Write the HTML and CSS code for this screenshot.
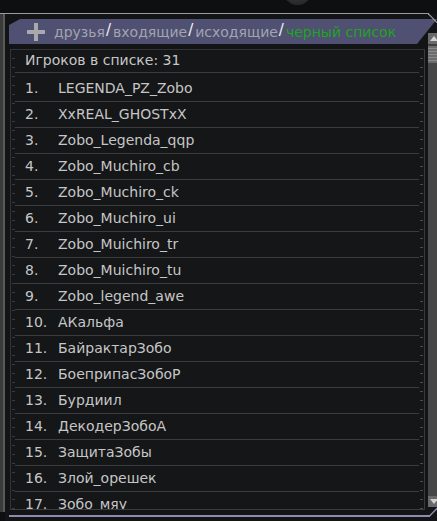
FILE: index.html
```html
<!DOCTYPE html>
<html lang="ru">
<head>
<meta charset="utf-8">
<link rel="stylesheet" href="styles.css">
</head>
<body>
<div class="top"><div class="knob"></div></div>
<div class="window">
  <div class="side"></div>
  <div class="main">
    <div class="tab">
      <svg class="plus" width="18" height="18" viewBox="0 0 18 18"><path d="M7 0h4v7h7v4h-7v7H7v-7H0V7h7z" fill="#a9a9ad"/></svg>
      <span class="link">друзья</span><span class="sep">/</span><span class="link">входящие</span><span class="sep">/</span><span class="link">исходящие</span><span class="sep">/</span><span class="link active">черный список</span>
    </div>
    <div class="content">
      <div class="listwrap">
        <div class="ruler-l"></div>
        <div class="list">
          <div class="head">Игроков в списке: 31</div>
          <ol class="rows">
            <li><span class="n">1.</span>LEGENDA_PZ_Zobo</li>
            <li><span class="n">2.</span>XxREAL_GHOSTxX</li>
            <li><span class="n">3.</span>Zobo_Legenda_qqp</li>
            <li><span class="n">4.</span>Zobo_Muchiro_cb</li>
            <li><span class="n">5.</span>Zobo_Muchiro_ck</li>
            <li><span class="n">6.</span>Zobo_Muchiro_ui</li>
            <li><span class="n">7.</span>Zobo_Muichiro_tr</li>
            <li><span class="n">8.</span>Zobo_Muichiro_tu</li>
            <li><span class="n">9.</span>Zobo_legend_awe</li>
            <li><span class="n">10.</span>АКальфа</li>
            <li><span class="n">11.</span>БайрактарЗобо</li>
            <li><span class="n">12.</span>БоеприпасЗобоР</li>
            <li><span class="n">13.</span>Бурдиил</li>
            <li><span class="n">14.</span>ДекодерЗобоА</li>
            <li><span class="n">15.</span>ЗащитаЗобы</li>
            <li><span class="n">16.</span>Злой_орешек</li>
            <li><span class="n">17.</span>Зобо_мяу</li>
          </ol>
        </div>
        <div class="ruler-r"></div>
      </div>
      <div class="scroll">
        <div class="btn up"></div>
        <div class="thumb"></div>
        <div class="track"></div>
        <div class="btn down"></div>
      </div>
    </div>
    <div class="bottom"></div>
  </div>
</div>
<svg class="corner-br" width="10" height="10" viewBox="0 0 10 10"><path d="M0 9.5L9 0.5" stroke="#8d8bb2" stroke-width="1.5" fill="none"/></svg>
<svg class="corner-tr" width="10" height="10" viewBox="0 0 10 10"><path d="M0 0.5L9 9.5" stroke="#9a9a9a" stroke-width="1.2" fill="none"/></svg>
</body>
</html>
```
FILE: styles.css
```css
html, body {
  margin: 0;
  padding: 0;
  background: #0e0f10;
  width: 437px;
  height: 521px;
  overflow: hidden;
  font-family: "DejaVu Sans", Tahoma, sans-serif;
}
body {
  position: relative;
}
.top {
  height: 13px;
  position: relative;
}
.knob {
  position: absolute;
  left: 283px;
  top: -24px;
  width: 29px;
  height: 29px;
  border-radius: 50%;
  background: radial-gradient(circle at 50% 40%, #4a4a4a, #2a2a2a 70%);
}
.window {
  display: flex;
  height: 507px;
  border-top: 1px solid #9a9a9a;
  margin-right: 8px;
}
.side {
  width: 3px;
  background: #3a3a3a;
  border-right: 2px solid #5a5a5a;
  height: 498px;
}
.main {
  flex: 1;
  display: flex;
  flex-direction: column;
  background: #131415;
  margin-right: -8px;
}
.tab {
  margin: 5px 0 0 4px;
  height: 25px;
  flex: none;
  background: #4f5072;
  display: flex;
  align-items: center;
  padding-left: 18px;
  clip-path: polygon(0 6px, 11px 0, 100% 0, calc(100% - 20px) 100%, 0 100%);
  font-size: 14px;
  color: #a4a4ae;
}
.plus {
  margin-right: 9px;
}
.sep {
  color: #f2f2f2;
  margin: 0 2px 0 1px;
  font-size: 15px;
  position: relative;
  top: -2px;
}
.active {
  color: #1ea51e;
}
.content {
  display: flex;
  height: 461px;
  flex: none;
  margin-top: 5px;
}
.listwrap {
  flex: 1;
  display: flex;
  margin-left: 5px;
  box-sizing: border-box;
  height: 461px;
  border-top: 1px solid #333436;
  border-bottom: 1px solid #3c3c3e;
  background: #151618;
  overflow: hidden;
}
.ruler-l {
  width: 4px;
  border-left: 1px solid #333436;
  background: repeating-linear-gradient(to bottom, transparent 0 8px, #3a3a3c 8px 9px) no-repeat 1px 0 / 3px 100%;
}
.ruler-r {
  width: 4px;
  margin-left: 1px;
  border-right: 1px solid #3a3a3c;
  background: repeating-linear-gradient(to bottom, transparent 0 8px, #4a4a4c 8px 9px) no-repeat 0 0 / 3px 100%;
}
.list {
  flex: 1;
  color: #c6c6c6;
  font-size: 14px;
}
.head {
  height: 22px;
  line-height: 21px;
  padding-left: 10px;
  border-bottom: 1px solid #3c3c3e;
}
.rows {
  list-style: none;
  margin: 3px 0 0;
  padding: 0;
}
.rows li {
  height: 25px;
  line-height: 25px;
  border-bottom: 1px solid #3c3c3e;
  padding-left: 10px;
  display: flex;
}
.n {
  width: 33px;
}
.scroll {
  width: 9px;
  margin-left: 3px;
  background: #3e3e3e;
  display: flex;
  flex-direction: column;
  height: 474px;
  margin-top: -16px;
}
.btn {
  height: 11px;
  background: #6a6a6a;
  position: relative;
}
.up::after, .down::after {
  content: "";
  position: absolute;
  left: 2px;
  border-left: 4px solid transparent;
  border-right: 4px solid transparent;
}
.up::after {
  top: 3px;
  border-bottom: 5px solid #d0d0d0;
}
.down::after {
  top: 3px;
  border-top: 5px solid #d0d0d0;
}
.thumb {
  height: 17px;
  margin-top: 2px;
  background: repeating-linear-gradient(to bottom, #6c6c6c 0 2px, #8a8a8a 2px 3px);
}
.track {
  flex: 1;
  background: #474747;
}
.bottom {
  height: 2px;
  flex: none;
  margin-top: 5px;
  margin-left: 4px;
  margin-right: 7px;
  background: #8d8bb2;
}
.corner-br {
  position: absolute;
  left: 429px;
  top: 507px;
}
.corner-tr {
  position: absolute;
  left: 428px;
  top: 13px;
}
```
